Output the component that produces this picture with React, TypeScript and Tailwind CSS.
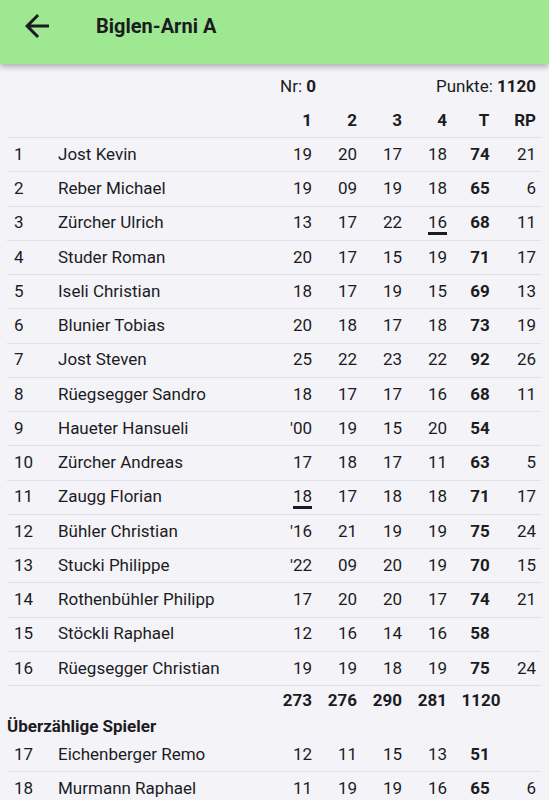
import { ReactNode } from 'react';

type Row = {
  nr: number;
  name: string;
  r: string[];
  t: string;
  rp: string;
  mark?: number;
};

const players: Row[] = [
  { nr: 1, name: 'Jost Kevin', r: ['19', '20', '17', '18'], t: '74', rp: '21' },
  { nr: 2, name: 'Reber Michael', r: ['19', '09', '19', '18'], t: '65', rp: '6' },
  { nr: 3, name: 'Zürcher Ulrich', r: ['13', '17', '22', '16'], t: '68', rp: '11', mark: 3 },
  { nr: 4, name: 'Studer Roman', r: ['20', '17', '15', '19'], t: '71', rp: '17' },
  { nr: 5, name: 'Iseli Christian', r: ['18', '17', '19', '15'], t: '69', rp: '13' },
  { nr: 6, name: 'Blunier Tobias', r: ['20', '18', '17', '18'], t: '73', rp: '19' },
  { nr: 7, name: 'Jost Steven', r: ['25', '22', '23', '22'], t: '92', rp: '26' },
  { nr: 8, name: 'Rüegsegger Sandro', r: ['18', '17', '17', '16'], t: '68', rp: '11' },
  { nr: 9, name: 'Haueter Hansueli', r: ["'00", '19', '15', '20'], t: '54', rp: '' },
  { nr: 10, name: 'Zürcher Andreas', r: ['17', '18', '17', '11'], t: '63', rp: '5' },
  { nr: 11, name: 'Zaugg Florian', r: ['18', '17', '18', '18'], t: '71', rp: '17', mark: 0 },
  { nr: 12, name: 'Bühler Christian', r: ["'16", '21', '19', '19'], t: '75', rp: '24' },
  { nr: 13, name: 'Stucki Philippe', r: ["'22", '09', '20', '19'], t: '70', rp: '15' },
  { nr: 14, name: 'Rothenbühler Philipp', r: ['17', '20', '20', '17'], t: '74', rp: '21' },
  { nr: 15, name: 'Stöckli Raphael', r: ['12', '16', '14', '16'], t: '58', rp: '' },
  { nr: 16, name: 'Rüegsegger Christian', r: ['19', '19', '18', '19'], t: '75', rp: '24' },
];

const extras: Row[] = [
  { nr: 17, name: 'Eichenberger Remo', r: ['12', '11', '15', '13'], t: '51', rp: '' },
  { nr: 18, name: 'Murmann Raphael', r: ['11', '19', '19', '16'], t: '65', rp: '6' },
];

const grid = 'grid grid-cols-[44px_209px_45px_45px_45px_45px_66px_23px] items-center pl-[7px] pr-[5px]';

function Cells({ nr, name, r, t, rp, mark }: Row) {
  return (
    <>
      <div>{nr}</div>
      <div className="whitespace-nowrap">{name}</div>
      {r.map((v, i) => (
        <div key={i} className="text-right">
          {mark === i ? (
            <span className="relative inline-block leading-[20px]">
              {v}
              <span className="absolute left-0 right-0 top-full h-[3px] bg-[#1c1b1f]" />
            </span>
          ) : (
            v
          )}
        </div>
      ))}
      <div className="text-center font-bold">{t}</div>
      <div className="text-right">{rp}</div>
    </>
  );
}

function Line({ children, className = '' }: { children: ReactNode; className?: string }) {
  return <div className={`${grid} ${className}`}>{children}</div>;
}

export default function App() {
  return (
    <div className="min-h-screen bg-[#f4f4f8] text-[#1c1b1f] font-['Roboto',sans-serif] text-[17px]">
      <header className="h-16 bg-[#9de891] flex items-start pt-[8px] shadow-[0_3px_6px_rgba(0,0,0,0.28)] relative z-10">
        <div className="w-[96px] pl-[19px] flex items-center h-[36px]">
          <svg width="36" height="36" viewBox="0 0 24 24" fill="#1c1b1f">
            <path d="M20 11H7.83l5.59-5.59L12 4l-8 8 8 8 1.41-1.41L7.83 13H20v-2z" />
          </svg>
        </div>
        <h1 className="text-[20px] font-bold leading-[36px]">Biglen-Arni A</h1>
      </header>

      <main className="mx-[8px] ml-[7px]">
        <div className="flex items-center h-[40px] pt-[6px]">
          <div className="w-[309px] text-right">
            Nr: <span className="font-bold">0</span>
          </div>
          <div className="flex-1 text-right pr-[5px]">
            Punkte: <span className="font-bold">1120</span>
          </div>
        </div>
        <Line className="h-[33px] font-bold">
          <div />
          <div />
          <div className="text-right">1</div>
          <div className="text-right">2</div>
          <div className="text-right">3</div>
          <div className="text-right">4</div>
          <div className="text-center pl-[8px]">T</div>
          <div className="text-right">RP</div>
        </Line>

        <div className="border-b border-[#dfe0e5]">
          {players.map((p) => (
            <Line key={p.nr} className="h-[34.25px] border-t border-[#dfe0e5]">
              <Cells {...p} />
            </Line>
          ))}
        </div>

        <Line className="h-[30px] font-bold">
          <div />
          <div />
          <div className="text-right">273</div>
          <div className="text-right">276</div>
          <div className="text-right">290</div>
          <div className="text-right">281</div>
          <div className="text-center pl-[2px]">1120</div>
          <div />
        </Line>

        <div className="h-[22px] flex items-center font-bold">Überzählige Spieler</div>

        <Line className="h-[33px]">
          <Cells {...extras[0]} />
        </Line>
        <Line className="h-[34px] border-t border-[#dfe0e5]">
          <Cells {...extras[1]} />
        </Line>
      </main>
    </div>
  );
}
